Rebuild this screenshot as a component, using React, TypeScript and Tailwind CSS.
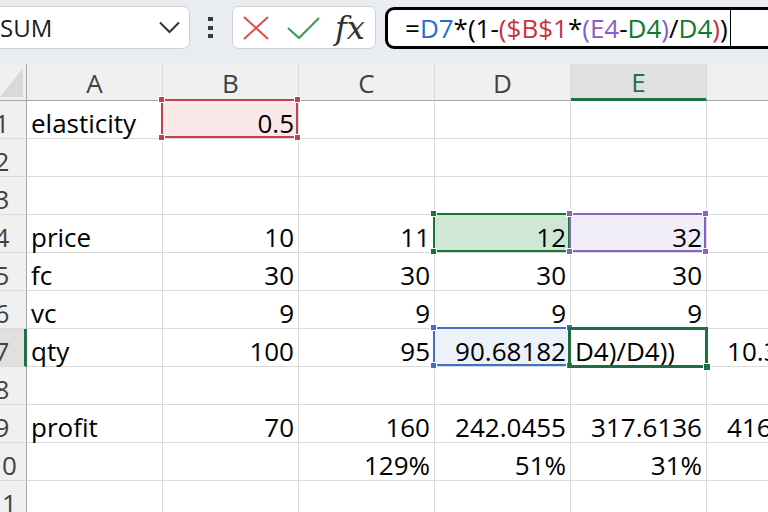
import React from 'react'

const COLS = ['A', 'B', 'C', 'D', 'E', 'F']

type Mark = { border: string; handle: string; fill: string }

const marks: Record<string, Mark> = {
  B1: { border: 'border-[#c4404b]', handle: 'bg-[#c4404b]', fill: 'bg-[#fbe9ea]' },
  D4: { border: 'border-[#117a2e]', handle: 'bg-[#117a2e]', fill: 'bg-[#d0e7d5]' },
  E4: { border: 'border-[#8763c2]', handle: 'bg-[#8763c2]', fill: 'bg-[#f1eef9]' },
  D7: { border: 'border-[#3c72c8]', handle: 'bg-[#3c72c8]', fill: 'bg-[#ecf1fa]' },
}

const rows: { n: number; cells: string[] }[] = [
  { n: 1, cells: ['elasticity', '0.5', '', '', '', ''] },
  { n: 2, cells: [] },
  { n: 3, cells: [] },
  { n: 4, cells: ['price', '10', '11', '12', '32', ''] },
  { n: 5, cells: ['fc', '30', '30', '30', '30', ''] },
  { n: 6, cells: ['vc', '9', '9', '9', '9', ''] },
  { n: 7, cells: ['qty', '100', '95', '90.68182', 'D4)/D4))', '10.31818'] },
  { n: 8, cells: [] },
  { n: 9, cells: ['profit', '70', '160', '242.0455', '317.6136', '416.1364'] },
  { n: 10, cells: ['', '', '129%', '51%', '31%', ''] },
  { n: 11, cells: [] },
]

const ACTIVE = 'E7'

function Handles({ color }: { color: string }) {
  const base = `absolute h-[7px] w-[7px] border border-white ${color}`
  return (
    <>
      <span className={`${base} -left-[5px] -top-[5px]`} />
      <span className={`${base} -right-[5px] -top-[5px]`} />
      <span className={`${base} -left-[5px] -bottom-[5px]`} />
      <span className={`${base} -right-[5px] -bottom-[5px]`} />
    </>
  )
}

function Cell({ id, value }: { id: string; value: string }) {
  const mark = marks[id]
  const numeric = /^[\d.%]+$/.test(value)
  const active = id === ACTIVE
  return (
    <div
      className={`relative flex h-full w-[136px] shrink-0 items-end border-r border-b border-[#dadada] px-[4px] ${
        numeric && !active ? 'justify-end' : 'justify-start'
      } ${mark ? mark.fill : 'bg-white'}`}
    >
      <span className="whitespace-nowrap leading-[29px]">{value}</span>
      {mark && (
        <div className={`absolute -left-[2px] -top-[2px] right-0 bottom-0 z-10 border-2 ${mark.border}`}>
          <Handles color={mark.handle} />
        </div>
      )}
      {active && (
        <div className="absolute -left-[3px] -top-[2px] -right-[2px] -bottom-[2px] z-20 border-[3px] border-[#1e6e42]">
          <span className="absolute -right-[6px] -bottom-[6px] h-[8px] w-[8px] border border-white bg-[#1e6e42]" />
        </div>
      )}
    </div>
  )
}

function Formula() {
  return (
    <span className="whitespace-nowrap text-black">
      =<span className="text-[#1f6fce]">D7</span>*(1-
      <span className="text-[#c8323c]">($B$1</span>*
      <span className="text-[#8b5cc6]">(E4</span>-
      <span className="text-[#0e7a2e]">D4</span>
      <span className="text-[#8b5cc6]">)</span>/
      <span className="text-[#0e7a2e]">D4</span>
      <span className="text-[#c8323c]">)</span>)
    </span>
  )
}

export default function App() {
  return (
    <div className="flex h-[512px] w-[768px] flex-col overflow-hidden bg-white font-['Open_Sans',sans-serif] text-[26px] text-black">
      {/* formula bar */}
      <div className="flex h-[64px] shrink-0 items-start bg-[#e9ecf0] pt-[6px]">
        <div className="ml-[-12px] flex h-[43px] w-[202px] shrink-0 items-center justify-between rounded-[7px] border border-[#d1d1d1] bg-white pl-[11px] pr-[9px]">
          <span className="text-[24px] text-[#1b1b1b]">SUM</span>
          <svg width="21" height="13" viewBox="0 0 21 13">
            <polyline points="1,1.5 10.5,11 20,1.5" fill="none" stroke="#333" strokeWidth="2" />
          </svg>
        </div>
        <div className="ml-[18px] mt-[11px] flex shrink-0 flex-col gap-[4.5px]">
          <span className="h-[4px] w-[5px] bg-[#3a3a3a]" />
          <span className="h-[4px] w-[5px] bg-[#3a3a3a]" />
          <span className="h-[4px] w-[5px] bg-[#3a3a3a]" />
        </div>
        <div className="ml-[19px] flex h-[43px] w-[144px] shrink-0 items-center rounded-[7px] border border-[#d1d1d1] bg-white pl-[10px]">
          <svg width="26" height="24" viewBox="0 0 26 24">
            <path d="M1 1 L25 23 M25 1 L1 23" stroke="#e84848" strokeWidth="2" fill="none" />
          </svg>
          <svg width="34" height="22" viewBox="0 0 34 22" className="ml-[18px]">
            <polyline points="1,11 12,21 32,1" fill="none" stroke="#3ba24c" strokeWidth="2.2" />
          </svg>
          <span className="ml-[14px] font-['DejaVu_Serif',serif] text-[32px] italic leading-none text-[#333]">fx</span>
        </div>
        <div className="ml-[9px] mt-[1px] flex h-[42px] w-[440px] shrink-0 items-center rounded-[9px] border-[3px] border-black bg-white pl-[17px]">
          <Formula />
          <span className="ml-[2px] h-[36px] w-[1px] bg-black" />
        </div>
      </div>

      {/* column headers */}
      <div className="flex h-[37px] shrink-0 bg-[#f0f0f0] text-[#424242]">
        <div className="w-[27px] shrink-0 border-r border-b border-[#a6a6a6]">
          <svg width="26" height="36" viewBox="0 0 26 36" className="block">
            <polygon points="0,33 23,33 23,4" fill="#d9d9d9" />
          </svg>
        </div>
        {COLS.map((c) => (
          <div
            key={c}
            className={`flex w-[136px] shrink-0 items-center justify-center border-r border-r-[#dadada] pt-[3px] ${
              c === 'E'
                ? 'border-b-[3px] border-b-[#1e7145] bg-[#e0e0e0] text-[#1e7145]'
                : 'border-b border-b-[#a6a6a6]'
            }`}
          >
            {c}
          </div>
        ))}
      </div>

      {/* rows */}
      {rows.map((r) => (
        <div key={r.n} className="flex h-[38px] shrink-0">
          <div
            className={`flex w-[27px] shrink-0 overflow-hidden border-b border-b-[#dadada] text-[#424242] ${
              r.n === 7 ? 'border-r-[3px] border-r-[#1e7145] bg-[#e0e0e0]' : 'border-r border-r-[#a6a6a6] bg-[#f0f0f0]'
            }`}
          >
            <div className="ml-[-23px] flex w-[50px] shrink-0 items-end justify-center">
              <span className="leading-[29px]">{r.n}</span>
            </div>
          </div>
          {COLS.map((c, i) => (
            <Cell key={c} id={c + r.n} value={r.cells[i] ?? ''} />
          ))}
        </div>
      ))}
    </div>
  )
}
